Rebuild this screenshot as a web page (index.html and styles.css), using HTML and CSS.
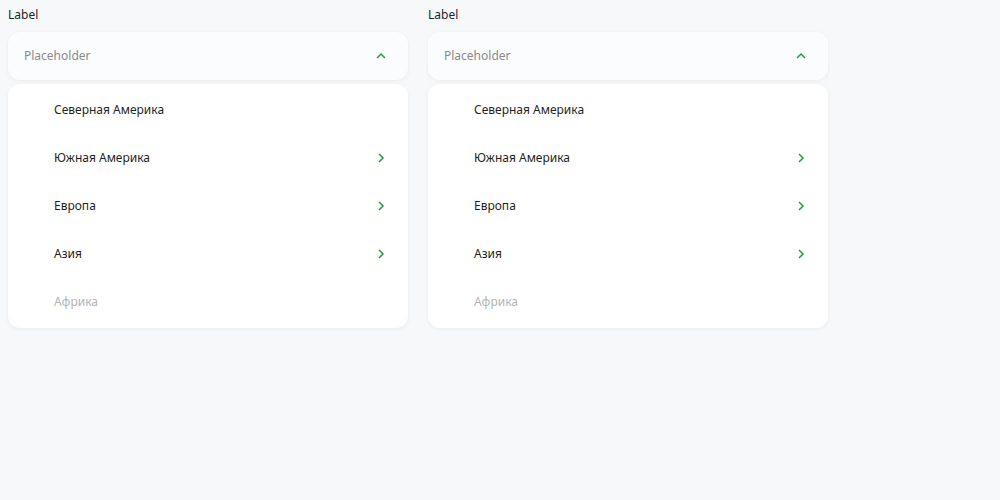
FILE: index.html
```html
<!DOCTYPE html>
<html lang="ru">
<head>
<meta charset="utf-8">
<link rel="stylesheet" href="styles.css">
</head>
<body>
<div class="row">
  <div class="field">
    <div class="label">Label</div>
    <div class="input">
      <span class="placeholder">Placeholder</span>
      <svg class="icon" width="12" height="12" viewBox="0 0 12 12"><path d="M2 8 L6 4 L10 8" fill="none" stroke="#21a038" stroke-width="1.5"/></svg>
    </div>
    <div class="menu">
      <div class="item"><span>Северная Америка</span></div>
      <div class="item"><span>Южная Америка</span><svg class="icon" width="12" height="12" viewBox="0 0 12 12"><path d="M4 2 L8 6 L4 10" fill="none" stroke="#21a038" stroke-width="1.5"/></svg></div>
      <div class="item"><span>Европа</span><svg class="icon" width="12" height="12" viewBox="0 0 12 12"><path d="M4 2 L8 6 L4 10" fill="none" stroke="#21a038" stroke-width="1.5"/></svg></div>
      <div class="item"><span>Азия</span><svg class="icon" width="12" height="12" viewBox="0 0 12 12"><path d="M4 2 L8 6 L4 10" fill="none" stroke="#21a038" stroke-width="1.5"/></svg></div>
      <div class="item disabled"><span>Африка</span></div>
    </div>
  </div>
  <div class="field">
    <div class="label">Label</div>
    <div class="input">
      <span class="placeholder">Placeholder</span>
      <svg class="icon" width="12" height="12" viewBox="0 0 12 12"><path d="M2 8 L6 4 L10 8" fill="none" stroke="#21a038" stroke-width="1.5"/></svg>
    </div>
    <div class="menu">
      <div class="item"><span>Северная Америка</span></div>
      <div class="item"><span>Южная Америка</span><svg class="icon" width="12" height="12" viewBox="0 0 12 12"><path d="M4 2 L8 6 L4 10" fill="none" stroke="#21a038" stroke-width="1.5"/></svg></div>
      <div class="item"><span>Европа</span><svg class="icon" width="12" height="12" viewBox="0 0 12 12"><path d="M4 2 L8 6 L4 10" fill="none" stroke="#21a038" stroke-width="1.5"/></svg></div>
      <div class="item"><span>Азия</span><svg class="icon" width="12" height="12" viewBox="0 0 12 12"><path d="M4 2 L8 6 L4 10" fill="none" stroke="#21a038" stroke-width="1.5"/></svg></div>
      <div class="item disabled"><span>Африка</span></div>
    </div>
  </div>
</div>
</body>
</html>
```
FILE: styles.css
```css
html, body {
  margin: 0;
  background: #f7f8fa;
}
body {
  padding: 8px;
  font-family: "Noto Sans", "Open Sans", sans-serif;
  font-size: 12px;
  color: #1f1f22;
}
.row {
  display: flex;
  gap: 20px;
}
.field {
  width: 400px;
  display: flex;
  flex-direction: column;
}
.label {
  height: 16px;
  line-height: 14px;
  margin-bottom: 8px;
}
.input {
  height: 48px;
  box-sizing: border-box;
  padding: 0 21px 0 16px;
  background: #fbfcfd;
  border-radius: 12px;
  display: flex;
  align-items: center;
  justify-content: space-between;
  box-shadow: 0 1px 4px rgba(0, 0, 0, 0.06);
}
.placeholder {
  color: #8a8a8e;
  padding-bottom: 2px;
}
.menu {
  margin-top: 4px;
  background: #ffffff;
  border-radius: 12px;
  padding: 2px 0;
  box-shadow: 0 1px 4px rgba(0, 0, 0, 0.06);
}
.item {
  height: 48px;
  padding: 0 21px 0 46px;
  display: flex;
  align-items: center;
  justify-content: space-between;
}
.item span {
  padding-bottom: 2px;
}
.item.disabled {
  color: #b3b3b6;
}
.icon {
  display: block;
}
```
